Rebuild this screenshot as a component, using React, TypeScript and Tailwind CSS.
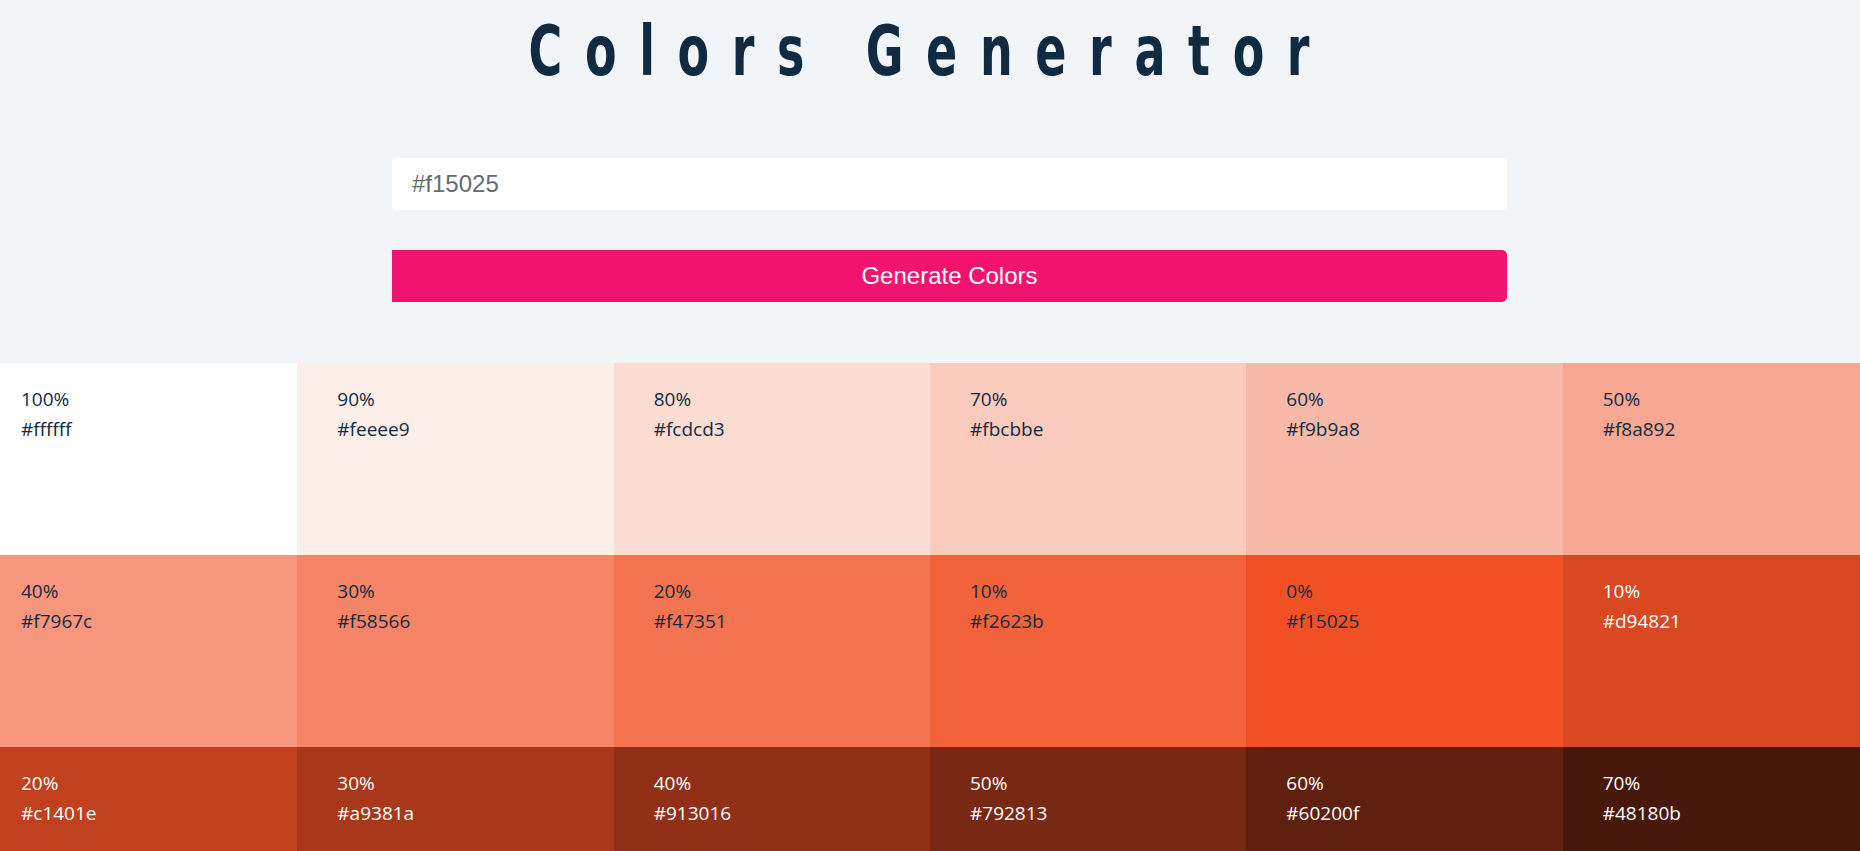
import { useState } from 'react'

const shades = [
  { weight: '100%', hex: '#ffffff', bg: 'bg-[#ffffff]', light: false },
  { weight: '90%', hex: '#feeee9', bg: 'bg-[#feeee9]', light: false },
  { weight: '80%', hex: '#fcdcd3', bg: 'bg-[#fcdcd3]', light: false },
  { weight: '70%', hex: '#fbcbbe', bg: 'bg-[#fbcbbe]', light: false },
  { weight: '60%', hex: '#f9b9a8', bg: 'bg-[#f9b9a8]', light: false },
  { weight: '50%', hex: '#f8a892', bg: 'bg-[#f8a892]', light: false },
  { weight: '40%', hex: '#f7967c', bg: 'bg-[#f7967c]', light: false },
  { weight: '30%', hex: '#f58566', bg: 'bg-[#f58566]', light: false },
  { weight: '20%', hex: '#f47351', bg: 'bg-[#f47351]', light: false },
  { weight: '10%', hex: '#f2623b', bg: 'bg-[#f2623b]', light: false },
  { weight: '0%', hex: '#f15025', bg: 'bg-[#f15025]', light: false },
  { weight: '10%', hex: '#d94821', bg: 'bg-[#d94821]', light: true },
  { weight: '20%', hex: '#c1401e', bg: 'bg-[#c1401e]', light: true },
  { weight: '30%', hex: '#a9381a', bg: 'bg-[#a9381a]', light: true },
  { weight: '40%', hex: '#913016', bg: 'bg-[#913016]', light: true },
  { weight: '50%', hex: '#792813', bg: 'bg-[#792813]', light: true },
  { weight: '60%', hex: '#60200f', bg: 'bg-[#60200f]', light: true },
  { weight: '70%', hex: '#48180b', bg: 'bg-[#48180b]', light: true },
]

export default function App() {
  const [value, setValue] = useState('#f15025')

  return (
    <div className="h-[851px] overflow-hidden bg-[#f1f5f8]">
      {/* Title */}
      <h1 className="pt-[16px] text-center text-[70px] leading-none font-bold text-[#102a42] font-['DejaVu_Sans_Condensed','DejaVu_Sans',sans-serif]">
        <span className="inline-block scale-x-[0.73] tracking-[31px]">Colors Generator</span>
      </h1>

      {/* Form */}
      <form
        className="mt-[72px] ml-[392px] w-[1115px] flex flex-col gap-[40px] font-['Liberation_Sans',Arial,sans-serif]"
        onSubmit={(e) => e.preventDefault()}
      >
        <input
          type="text"
          value={value}
          onChange={(e) => setValue(e.target.value)}
          className="h-[52px] bg-white rounded-l-[5px] px-[20px] text-[24px] text-[#666b70] outline-none"
        />
        <button
          type="submit"
          className="h-[52px] bg-[#f2136f] rounded-r-[5px] text-white text-[24px]"
        >
          Generate Colors
        </button>
      </form>

      {/* Swatches */}
      <section className="mt-[61px] -ml-[19px] w-[1898px] grid grid-cols-6 font-['Segoe_UI','Open_Sans',sans-serif] text-[19px] leading-[30px]">
        {shades.map((s, i) => (
          <article
            key={i}
            className={`h-[192px] px-[40px] pt-[21px] ${s.bg} ${s.light ? 'text-white' : 'text-[#102a42]'}`}
          >
            <p>{s.weight}</p>
            <p>{s.hex}</p>
          </article>
        ))}
      </section>
    </div>
  )
}
